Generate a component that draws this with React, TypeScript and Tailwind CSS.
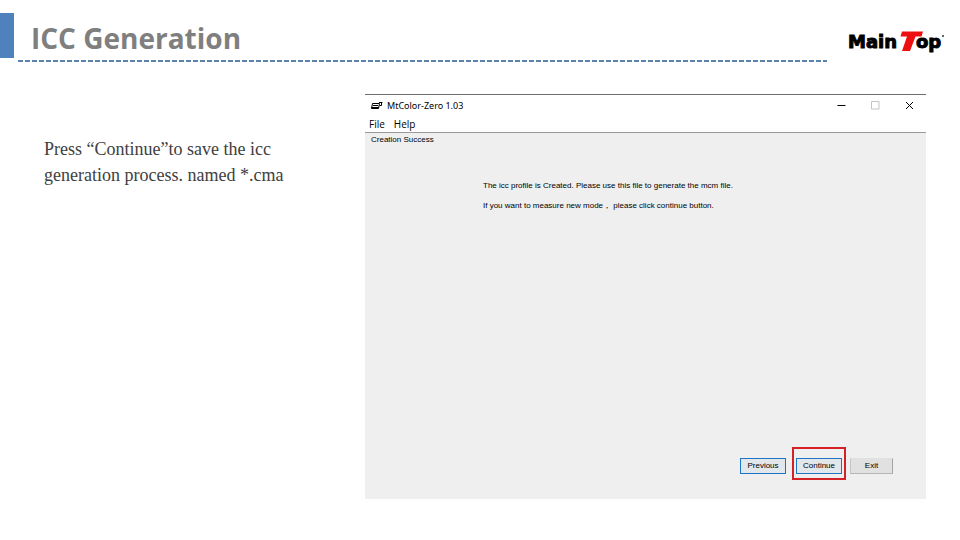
import type { ReactNode } from "react"

function MainTopLogo() {
  return (
    <svg viewBox="0 0 98 24" className="h-6 w-[98px] shrink-0" role="img" aria-label="MainTop">
      <g fontFamily="'DejaVu Sans', sans-serif" fontWeight="700" fontSize="18" fill="#000" stroke="#000" strokeWidth="1">
        <text x="2" y="19">Main</text>
        <text x="70" y="19">op</text>
      </g>
      <path d="M56 2.5H77L75.500 7.500H69.500L64 22H56L61 7.500H54.500Z" fill="#ee1010" />
      <circle cx="97" cy="7" r="1" fill="#333" />
    </svg>
  )
}

function AppIcon() {
  return (
    <svg viewBox="0 0 12 10" className="h-[10px] w-3" aria-hidden="true">
      <path d="M1.500 2.500H8.500L7.500 7.500H0.500Z" fill="#fff" stroke="#000" />
      <path d="M2 4.500H7M0.500 6.500H8" stroke="#000" />
      <path d="M8 1.500H11.500M10.500 1.500V4.500M8.500 4.500H10.500" fill="none" stroke="#000" />
    </svg>
  )
}

function WindowControls() {
  return (
    <div className="flex items-center gap-[25px]">
      <button type="button" aria-label="Minimize">
        <svg viewBox="0 0 9 9" className="size-[9px]">
          <path d="M0.5 4.5H8.5" stroke="#000" />
        </svg>
      </button>
      <button type="button" aria-label="Maximize" disabled>
        <svg viewBox="0 0 9 9" className="size-[9px]">
          <path d="M0.5 0.5H8V8H0.5Z" fill="none" stroke="#c4c4c4" />
        </svg>
      </button>
      <button type="button" aria-label="Close">
        <svg viewBox="0 0 9 9" className="size-[9px]">
          <path d="M1 1L8 8M8 1L1 8" stroke="#000" />
        </svg>
      </button>
    </div>
  )
}

function DialogButton({ children, active }: { children: ReactNode; active?: boolean }) {
  return (
    <button
      type="button"
      className={
        active
          ? "h-4 w-[46px] border border-[#1f74c4] bg-[#e2e7ec] text-[8px] leading-[14px]"
          : "h-4 w-[43px] border border-[#e1e1e1] border-r-[#a5a5a5] border-b-[#b5b5b5] border-l-[#c5c5c5] bg-[#e1e1e1] text-[8px] leading-[14px]"
      }
    >
      {children}
    </button>
  )
}

function ColorWindow() {
  return (
    <section
      aria-label="MtColor-Zero 1.03"
      className="flex min-w-0 flex-1 flex-col border-t border-[#6e6e6e] bg-[#efefef] font-['Liberation_Sans',sans-serif] text-black"
    >
      <div className="flex h-[21px] items-center justify-between bg-white pr-3 pl-[6px]">
        <div className="flex items-center gap-1">
          <AppIcon />
          <span className="font-['Noto_Sans',sans-serif] text-[9px]">MtColor-Zero 1.03</span>
        </div>
        <WindowControls />
      </div>
      <nav className="flex h-[17px] items-center gap-[9px] border-b border-[#999] bg-white pl-1 font-['Open_Sans',sans-serif] text-[10px]">
        <button type="button">File</button>
        <button type="button">Help</button>
      </nav>
      <p className="pl-[6px] text-[8px] leading-[14px]">Creation Success</p>
      <div className="pt-[29px] pl-[118px] text-[8px] leading-5">
        <p>The icc profile is Created. Please use this file to generate the mcm file.</p>
        <p>If you want to measure new mode， please click continue button.</p>
      </div>
      <div className="flex justify-end gap-2 pt-[242px] pr-[33px] pb-[25px]">
        <DialogButton active>Previous</DialogButton>
        <div className="relative ml-[2px] flex">
          <DialogButton active>Continue</DialogButton>
          <div className="pointer-events-none absolute -inset-x-1 -top-[11px] -bottom-[6px] border-2 border-[#d42027]" />
        </div>
        <DialogButton>Exit</DialogButton>
      </div>
    </section>
  )
}

export default function App() {
  return (
    <div className="min-h-screen bg-white">
      <header className="flex items-start justify-between pt-[13px] pr-4">
        <div className="h-[45px] w-[14px] shrink-0 bg-[#4f81bd]" />
        <div className="min-w-0 flex-1 pl-1">
          <h1 className="pt-[3px] pl-[13px] font-['Open_Sans','Noto_Sans',sans-serif] text-[28px] leading-[44px] font-bold text-[#7f7f7f]">
            ICC Generation
          </h1>
          <div className="h-[2px] bg-[repeating-linear-gradient(90deg,#5b82ad_0_5px,transparent_5px_7px)]" />
        </div>
        <div className="pt-4 pl-[19px]">
          <MainTopLogo />
        </div>
      </header>
      <main className="flex items-start pt-8 pr-[34px] pl-11">
        <p className="w-[321px] shrink-0 pt-[42px] pr-[70px] font-['Liberation_Serif',serif] text-[18px] leading-[26px] text-[#404040]">
          Press “Continue”to save the icc generation process. named *.cma
        </p>
        <ColorWindow />
      </main>
    </div>
  )
}
